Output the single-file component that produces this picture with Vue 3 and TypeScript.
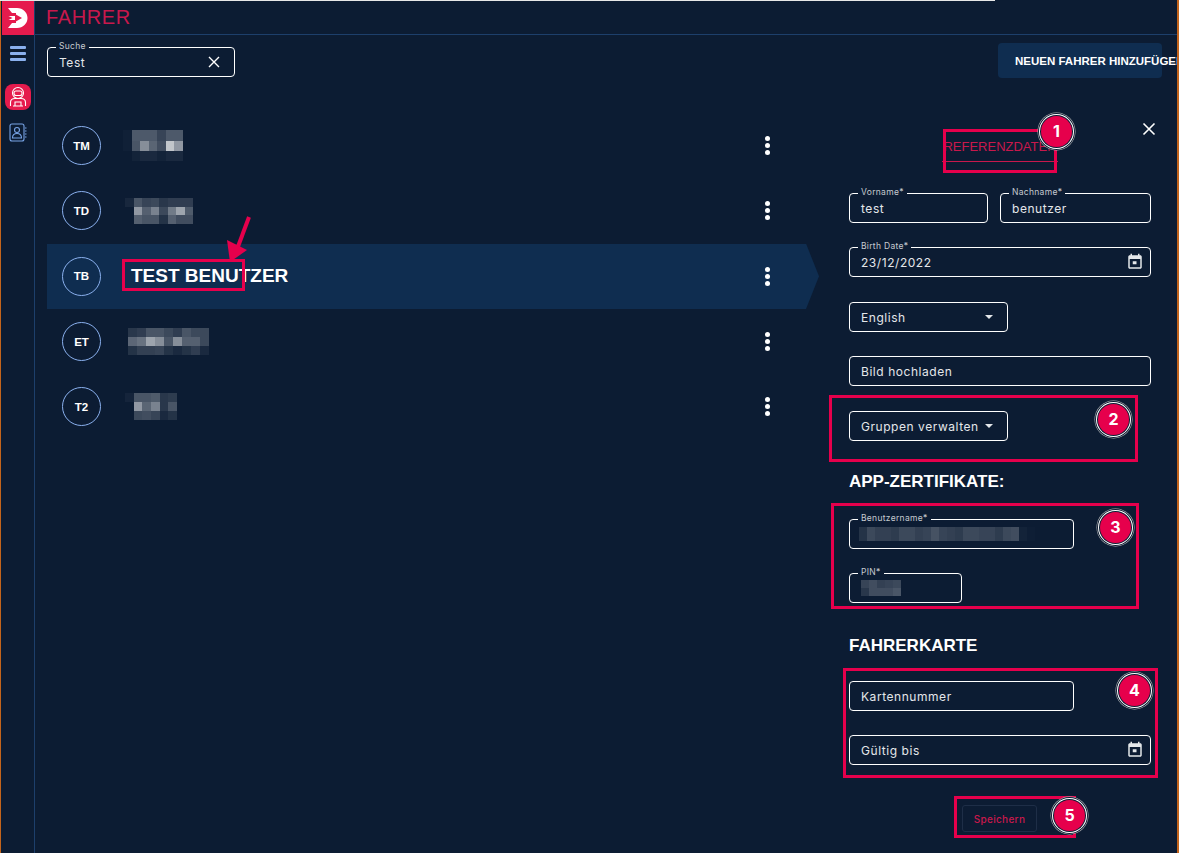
<script setup lang="ts">
interface Driver { initials: string; name?: string; mosaic?: { cell: number; height: number; offset: number; rows: number[][] } }

const drivers: Driver[] = [
  { initials: 'TM', mosaic: { cell: 8.5, height: 10.3, offset: -8, rows: [[.02,.27,.27,.27,.18,.27,.27],[.02,.25,.5,.32,.22,.75,.55],[0,.03,.06,.06,.03,.06,.06]] } },
  { initials: 'TD', mosaic: { cell: 8.5, height: 8.7, offset: -6, rows: [[.05,.25,.18,.2,.12,.15,.15,.15],[0,.55,.3,.45,.2,.42,.6,.28],[0,.3,.25,.25,.1,.3,.22,.22]] } },
  { initials: 'TB', name: 'TEST BENUTZER' },
  { initials: 'ET', mosaic: { cell: 9, height: 9.3, offset: -3, rows: [[.12,.15,.25,.25,.2,.15,.25,.2,.2],[.33,.38,.6,.5,.25,.5,.3,.3,.2],[.1,.16,.16,.18,.1,.06,.1,.15,.06]] } },
  { initials: 'T2', mosaic: { cell: 8.7, height: 9, offset: -6, rows: [[.04,.25,.25,.28,.12,.14],[0,.55,.32,.45,.12,.25],[0,.2,.22,.18,.06,.1]] } },
]
const userRows = [[.1,.2,.16,.16,.14,.2,.2,.16,.18,.24,.18,.16,.14,.2,.2,.18,.18,.14,.2,.22,.03,.01]]
const pinRows = [[.18,.22,.16,.18,.2],[.12,.22,.22,.22,.26]]
const tint = (a: number) => `rgba(255,255,255,${a})`
</script>

<template>
  <div class="app">
    <aside class="rail">
      <div class="logo">
        <svg width="20" height="20" viewBox="0 0 20 20"><path d="M0 0h9c6 0 10.500 4.500 10.500 10S15 20 9 20H0l4-5h4v-3H0.500l4-2-4-2H8V5H4z" fill="#fff"/><path d="M7 6l7 4-7 4z" fill="#e51b4d"/></svg>
      </div>
      <div class="burger"><i></i><i></i><i></i></div>
      <div class="tile">
        <svg width="22" height="22" viewBox="0 0 22 22" fill="none" stroke="#fff" stroke-width="1.100"><circle cx="11" cy="7" r="5.500"/><rect x="7" y="5" width="8" height="4.500" rx="2"/><path d="M3.500 20v-3.500c0-2.500 2-4 4.500-4h6c2.500 0 4.500 1.500 4.500 4V20M8 20v-4h6v4M6 20h10"/></svg>
      </div>
      <svg class="book" width="18" height="19" viewBox="0 0 18 19" fill="none" stroke="#78a4e6" stroke-width="1.100"><rect x="1" y="1" width="14" height="17" rx="2"/><circle cx="8" cy="7" r="2.500"/><path d="M3.500 15c0-3 2-4.500 4.500-4.500s4.500 1.500 4.500 4.500zM16 5h1.500M16 8h1.500M16 11h1.500M16 14h1.500"/></svg>
    </aside>

    <div class="main">
      <header class="topbar"><h1>FAHRER</h1></header>

      <div class="toolbar">
        <div class="field search">
          <span class="legend">Suche</span>
          <span class="value">Test</span>
          <svg class="x" width="12" height="12" viewBox="0 0 12 12"><path d="M1 1l10 10M11 1L1 11" stroke="#fff" stroke-width="1.400"/></svg>
        </div>
        <button class="add">
          <svg width="14" height="14" viewBox="0 0 14 14" fill="none" stroke="#78a4e6" stroke-width="1.100"><circle cx="7" cy="7" r="6"/><path d="M7 3.800v6.400M3.800 7h6.400"/></svg>
          <span class="cond">NEUEN FAHRER HINZUFÜGEN</span>
        </button>
      </div>

      <div class="content">
        <ul class="list">
          <li v-for="d in drivers" :key="d.initials" class="row" :class="{ active: d.name }">
            <span class="avatar"><span class="cond">{{ d.initials }}</span></span>
            <span class="name-slot">
              <span v-if="d.name" class="cond name">{{ d.name }}</span>
              <span v-else-if="d.mosaic" class="mosaic" :style="{ marginLeft: d.mosaic.offset + 'px' }">
                <span v-for="(r, i) in d.mosaic.rows" :key="i" class="mrow" :style="{ height: d.mosaic.height + 'px' }">
                  <i v-for="(a, j) in r" :key="j" :style="{ width: d.mosaic.cell + 'px', background: tint(a) }"></i>
                </span>
              </span>
            </span>
            <span class="dots"><i></i><i></i><i></i></span>
          </li>
        </ul>

        <section class="panel">
          <div class="head">
            <span class="tab cond">REFERENZDATEN</span>
            <svg class="close" width="14" height="14" viewBox="0 0 14 14"><path d="M1.500 1.500l11 11M12.500 1.500l-11 11" stroke="#fff" stroke-width="1.600"/></svg>
          </div>

          <div class="two">
            <div class="field"><span class="legend">Vorname*</span><span class="value">test</span></div>
            <div class="field"><span class="legend">Nachname*</span><span class="value">benutzer</span></div>
          </div>
          <div class="field gap-a">
            <span class="legend">Birth Date*</span><span class="value">23/12/2022</span>
            <svg class="cal" width="18" height="18" viewBox="0 0 24 24"><path fill="#e4e7ea" d="M16 1v2H8V1H6v2H5C3.900 3 3 3.900 3 5v14c0 1.100.9 2 2 2h14c1.100 0 2-.9 2-2V5c0-1.100-.9-2-2-2h-1V1zm3 18H5V8h14zM9 11h5v4H9z"/></svg>
          </div>
          <div class="field w-s gap-b"><span class="value">English</span><i class="caret"></i></div>
          <div class="field gap-a"><span class="value">Bild hochladen</span></div>
          <div class="field w-s gap-b"><span class="value">Gruppen verwalten</span><i class="caret"></i></div>

          <h2 class="cond title-a">APP-ZERTIFIKATE:</h2>
          <div class="field w-m">
            <span class="legend">Benutzername*</span>
            <span class="blur user" v-for="(r, i) in userRows" :key="i"><i v-for="(a, j) in r" :key="j" :style="{ background: tint(a) }"></i></span>
          </div>
          <div class="field w-p gap-a">
            <span class="legend">PIN*</span>
            <span class="pin"><span v-for="(r, i) in pinRows" :key="i" class="blur"><i v-for="(a, j) in r" :key="j" :style="{ background: tint(a) }"></i></span></span>
          </div>

          <h2 class="cond title-b">FAHRERKARTE</h2>
          <div class="field w-m"><span class="value">Kartennummer</span></div>
          <div class="field gap-a">
            <span class="value">Gültig bis</span>
            <svg class="cal" width="18" height="18" viewBox="0 0 24 24"><path fill="#e4e7ea" d="M16 1v2H8V1H6v2H5C3.900 3 3 3.900 3 5v14c0 1.100.9 2 2 2h14c1.100 0 2-.9 2-2V5c0-1.100-.9-2-2-2h-1V1zm3 18H5V8h14zM9 11h5v4H9z"/></svg>
          </div>
          <button class="save">Speichern</button>
        </section>
      </div>
    </div>

    <div class="edge-top"></div>
    <div class="edge-right"></div>

    <div class="note b0"></div>
    <div class="note b1"></div>
    <div class="note b2"></div>
    <div class="note b3"></div>
    <div class="note b4"></div>
    <div class="note b5"></div>
    <span class="badge n1">1</span>
    <span class="badge n2">2</span>
    <span class="badge n3">3</span>
    <span class="badge n4">4</span>
    <span class="badge n5">5</span>
    <svg class="arrow" width="40" height="60" viewBox="0 0 40 60"><path d="M28 3L15 38" stroke="#e6004c" stroke-width="4" fill="none"/><path d="M6 26l20 10-17 12z" fill="#e6004c"/></svg>
  </div>
</template>

<style>
html, body { margin: 0; background: #0c1c33; }
</style>

<style scoped>
.app {
  position: relative;
  display: flex;
  width: 1179px;
  height: 853px;
  overflow: hidden;
  background: #0c1c33;
  color: #fff;
  font-family: Inter, "Liberation Sans", sans-serif;
}
.cond {
  font-family: "Liberation Sans Narrow", "Liberation Sans", sans-serif;
  font-weight: 700;
}
.rail {
  flex: none;
  box-sizing: border-box;
  width: 35px;
  height: 853px;
  border-left: 1px solid #c4641c;
  border-right: 1px solid #1d3f6b;
  display: flex;
  flex-direction: column;
  align-items: center;
}
.logo {
  align-self: stretch;
  margin: 1px 0 0 1px;
  height: 34px;
  background: #e51b4d;
  display: flex;
  align-items: center;
  justify-content: center;
}
.burger {
  width: 16px;
  margin-top: 11px;
  display: flex;
  flex-direction: column;
  gap: 3px;
}
.burger i { display: block; height: 3px; border-radius: 1px; background: #8ab0ee; }
.tile {
  width: 26px;
  height: 26px;
  margin-top: 23px;
  border-radius: 8px;
  background: #e51b4d;
  display: flex;
  align-items: center;
  justify-content: center;
}
.book { margin-top: 13px; }
.main { flex: 1; min-width: 0; display: flex; flex-direction: column; }
.topbar {
  box-sizing: border-box;
  height: 35px;
  padding-left: 11px;
  border-bottom: 1px solid #1d3f6b;
  display: flex;
  align-items: center;
}
.topbar h1 {
  margin: 0;
  font: 400 20px "Liberation Sans Narrow", "Liberation Sans", sans-serif;
  color: #c8184c;
  letter-spacing: .6px;
}
.toolbar {
  display: flex;
  justify-content: space-between;
  align-items: center;
  height: 35px;
  padding: 8px 17px 0 12px;
}
.field {
  position: relative;
  box-sizing: border-box;
  height: 30px;
  border: 1px solid #fff;
  border-radius: 4px;
  display: flex;
  align-items: center;
  padding: 0 11px;
}
.search { width: 188px; margin-top: 3px; }
.legend {
  position: absolute;
  left: 8px;
  top: -7px;
  padding: 0 3px;
  background: #0c1c33;
  color: #c6cad0;
  font-size: 8.500px;
  line-height: 11px;
  letter-spacing: .3px;
}
.value { font-size: 12px; letter-spacing: .55px; color: #e4e7ea; }
.x { margin-left: auto; margin-right: 3px; }
.add {
  box-sizing: border-box;
  width: 164px;
  height: 35px;
  border: 0;
  border-radius: 4px;
  background: #0f2d50;
  color: #fff;
  display: flex;
  align-items: center;
  gap: 7px;
  padding: 0 10px;
}
.add .cond { font-size: 11.500px; white-space: nowrap; }
.content { display: flex; padding: 35px 0 0 12px; }
.list { list-style: none; margin: 0; padding: 0; width: 772px; flex: none; }
.row {
  height: 65.300px;
  display: flex;
  align-items: center;
  padding-left: 15px;
  box-sizing: border-box;
}
.row.active {
  background: #0f2d50;
  clip-path: polygon(0 0, 759px 0, 100% 50%, 759px 100%, 0 100%);
}
.avatar {
  box-sizing: border-box;
  width: 39px;
  height: 39px;
  flex: none;
  border: 1px solid #8ab0ee;
  border-radius: 50%;
  display: flex;
  align-items: center;
  justify-content: center;
  font-size: 11.500px;
}
.name-slot { margin-left: 30px; width: 634px; flex: none; }
.name { font-size: 19px; white-space: nowrap; }
.mosaic { display: flex; flex-direction: column; width: max-content; }
.mrow { display: flex; }
.mrow i { display: block; height: 100%; }
.dots { display: flex; flex-direction: column; gap: 2px; }
.dots i { display: block; width: 5px; height: 5px; border-radius: 50%; background: #fff; }
.panel {
  width: 302px;
  margin-left: 30px;
  margin-top: -4px;
  flex: none;
  display: flex;
  flex-direction: column;
}
.head {
  position: relative;
  height: 84px;
  display: flex;
  justify-content: center;
  align-items: flex-start;
}
.tab {
  margin-top: 29px;
  height: 23px;
  padding: 0 1px;
  border-bottom: 1px solid #c8184c;
  color: #c8184c;
  font-weight: 400;
  font-size: 13px;
  line-height: 17px;
}
.close { position: absolute; right: -5px; top: 13px; }
.two { display: grid; grid-template-columns: 139px 151px; column-gap: 12px; }
.gap-a { margin-top: 24px; }
.gap-b { margin-top: 25px; }
.w-s { width: 159px; }
.w-m { width: 225px; }
.w-p { width: 113px; }
.cal { position: absolute; right: 6px; top: 5px; }
.caret {
  margin-left: auto;
  margin-right: 3px;
  width: 0;
  height: 0;
  border-left: 4.500px solid transparent;
  border-right: 4.500px solid transparent;
  border-top: 4px solid #e4e7ea;
}
h2 { margin: 0; font-size: 17px; line-height: 20px; }
.title-a { margin-top: 31px; margin-bottom: 27px; }
.title-b { margin-top: 33px; margin-bottom: 25px; }
.blur { display: flex; height: 8px; }
.blur i { display: block; width: 8px; height: 100%; }
.user { height: 14px; margin-left: -2px; }
.pin { display: flex; flex-direction: column; }
.save {
  align-self: flex-start;
  box-sizing: border-box;
  margin: 40px 0 0 113px;
  width: 75px;
  height: 27px;
  border: 1px solid #1e2e47;
  border-radius: 3px;
  background: transparent;
  color: #c8184c;
  font: 500 10px Inter, "Liberation Sans", sans-serif;
  letter-spacing: .3px;
}
.edge-top { position: absolute; left: 0; top: 0; width: 995px; height: 1px; background: #e8e8e8; }
.edge-right { position: absolute; right: 0; top: 0; width: 2px; height: 853px; background: #c4641c; }
.note { position: absolute; box-sizing: border-box; border: 3px solid #e6004c; }
.b0 { left: 122px; top: 259px; width: 123px; height: 32px; }
.b1 { left: 943px; top: 129px; width: 114px; height: 44px; }
.b2 { left: 829px; top: 395px; width: 309px; height: 67px; }
.b3 { left: 831px; top: 503px; width: 308px; height: 106px; }
.b4 { left: 843px; top: 668px; width: 315px; height: 110px; }
.b5 { left: 954px; top: 796px; width: 122px; height: 42px; }
.badge {
  position: absolute;
  box-sizing: border-box;
  width: 31px;
  height: 31px;
  border-radius: 50%;
  background: #e6004c;
  box-shadow: 0 0 0 1px #0c1c33, 0 0 0 2px #fff, 0 0 0 3px #0c1c33, 0 0 0 3.500px #bbb;
  color: #fff;
  font: 700 16px/31px Inter, "Liberation Sans", sans-serif;
  text-align: center;
}
.n1 { left: 1041px; top: 116px; }
.n2 { left: 1098px; top: 404px; }
.n3 { left: 1100px; top: 512px; }
.n4 { left: 1119px; top: 675px; }
.n5 { left: 1054px; top: 800px; }
.arrow { position: absolute; left: 221px; top: 214px; }
</style>
